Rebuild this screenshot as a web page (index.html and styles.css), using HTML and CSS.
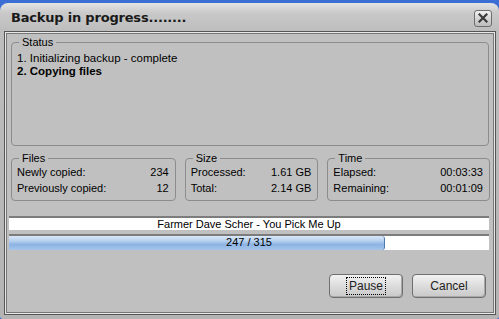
FILE: index.html
```
<!DOCTYPE html>
<html lang="en">
<head>
    <meta charset="UTF-8">
    <title>Backup in progress</title>
    <link rel="stylesheet" href="styles.css">
</head>
<body>
    <div class="window">
        <div class="titlebar">
            <span class="title">Backup in progress........</span>
            <button class="close" aria-label="Close">
                <svg width="10" height="10" viewBox="0 0 10 10">
                    <path d="M1.5 1.5 L8.5 8.5 M8.5 1.5 L1.5 8.5" stroke="#3a3a3a" stroke-width="2.2" stroke-linecap="square"/>
                </svg>
            </button>
        </div>

        <div class="content">
            <fieldset class="group status">
                <legend>Status</legend>
                <p>1. Initializing backup - complete</p>
                <p class="current">2. Copying files</p>
            </fieldset>

            <div class="stats">
                <fieldset class="group files">
                    <legend>Files</legend>
                    <div class="row"><span>Newly copied:</span><span>234</span></div>
                    <div class="row"><span>Previously copied:</span><span>12</span></div>
                </fieldset>
                <fieldset class="group size">
                    <legend>Size</legend>
                    <div class="row"><span>Processed:</span><span>1.61 GB</span></div>
                    <div class="row"><span>Total:</span><span>2.14 GB</span></div>
                </fieldset>
                <fieldset class="group time">
                    <legend>Time</legend>
                    <div class="row"><span>Elapsed:</span><span>00:03:33</span></div>
                    <div class="row"><span>Remaining:</span><span>00:01:09</span></div>
                </fieldset>
            </div>

            <div class="track">Farmer Dave Scher - You Pick Me Up</div>
            <div class="progress">
                <div class="fill" style="width: 78.4%"></div>
                <span class="count">247 / 315</span>
            </div>

            <div class="buttons">
                <button class="btn"><span class="focus">Pause</span></button>
                <button class="btn">Cancel</button>
            </div>
        </div>
    </div>
</body>
</html>
```

FILE: styles.css
```
body {
    margin: 0;
    background: #3b6fd6;
    font-family: "Liberation Sans", Arial, sans-serif;
    font-size: 11px;
    color: #000;
}
.window {
    margin-top: 3px;
    height: 316px;
    border-radius: 8px 8px 3px 3px;
    background: linear-gradient(#e4e4e4, #c9c9c9 10px, #bdbdbd 28px, #b4b4b4);
    display: flex;
    flex-direction: column;
}
.titlebar {
    height: 28px;
    display: flex;
    align-items: center;
    justify-content: space-between;
    padding: 0 7px 0 11px;
}
.title {
    font-family: "DejaVu Sans", sans-serif;
    font-weight: bold;
    font-size: 13px;
    color: #1a1a1a;
    letter-spacing: -0.2px;
}
.close {
    width: 18px;
    height: 17px;
    padding: 0;
    border: 1px solid #6e6e6e;
    border-radius: 3px;
    background: linear-gradient(#f0f0f0, #cfcfcf 60%, #bdbdbd);
    display: flex;
    align-items: center;
    justify-content: center;
    margin-top: 2px;
}
.content {
    flex: 1;
    margin: 0 3px 4px 4px;
    border: 1px solid #555;
    box-shadow: inset 1px 1px 0 #e8e8e8, inset -1px -1px 0 #e8e8e8, inset 2px 2px 0 #777, inset -2px -2px 0 #777;
    background: #c0c0c0;
    padding: 4px 5px 0 4px;
    display: flex;
    flex-direction: column;
}
.group {
    margin: 0;
    border: 1px solid #8c8c8c;
    border-radius: 4px;
    padding: 0 5px 4px 5px;
}
.group legend {
    padding: 0 3px;
    margin-left: 2px;
}
.status {
    margin: 0 1px 0 2px;
    height: 110px;
    box-sizing: border-box;
    padding-top: 4px;
}
.status p {
    margin: 0;
    font-size: 11.5px;
    line-height: 13px;
}
.status .current {
    font-weight: bold;
    font-size: 11.5px;
}
.stats {
    display: flex;
    gap: 9px;
    margin: 6px 0 0 2px;
}
.files { width: 165px; box-sizing: border-box; }
.size { width: 134px; box-sizing: border-box; }
.time { width: 163px; box-sizing: border-box; }
.row {
    display: flex;
    justify-content: space-between;
    line-height: 16px;
    padding-right: 1px;
}
.track {
    margin: 15px 1px 0 0;
    background: #fff;
    border-top: 2px solid #7c7c7c;
    text-align: center;
    box-sizing: border-box;
    height: 14px;
    line-height: 12px;
}
.progress {
    position: relative;
    margin: 4px 1px 0 0;
    height: 16px;
    background: #fff;
    border-top: 2px solid #7c7c7c;
    box-sizing: border-box;
}
.fill {
    height: 100%;
    border-right: 1px solid #4f78ad;
    border-radius: 0 3px 3px 0;
    background: linear-gradient(#d9e7f7, #b7d1ef 35%, #8cb3e3 60%, #a6c6ec);
    box-sizing: border-box;
}
.count {
    position: absolute;
    left: 0;
    right: 0;
    top: 0;
    text-align: center;
    line-height: 13px;
}
.buttons {
    display: flex;
    justify-content: flex-end;
    gap: 9px;
    margin-top: 24px;
    padding-right: 4px;
}
.btn {
    width: 74px;
    height: 24px;
    font-family: "Liberation Sans", Arial, sans-serif;
    font-size: 12px;
    color: #222;
    border: 1px solid #6f6f6f;
    border-radius: 4px;
    background: linear-gradient(#f2f2f2, #dcdcdc 50%, #c9c9c9);
    box-shadow: inset -1px -1px 0 #a8a8a8;
    padding: 0;
}
.focus {
    border: 1px dotted #000;
    padding: 1px 2px;
}
```
